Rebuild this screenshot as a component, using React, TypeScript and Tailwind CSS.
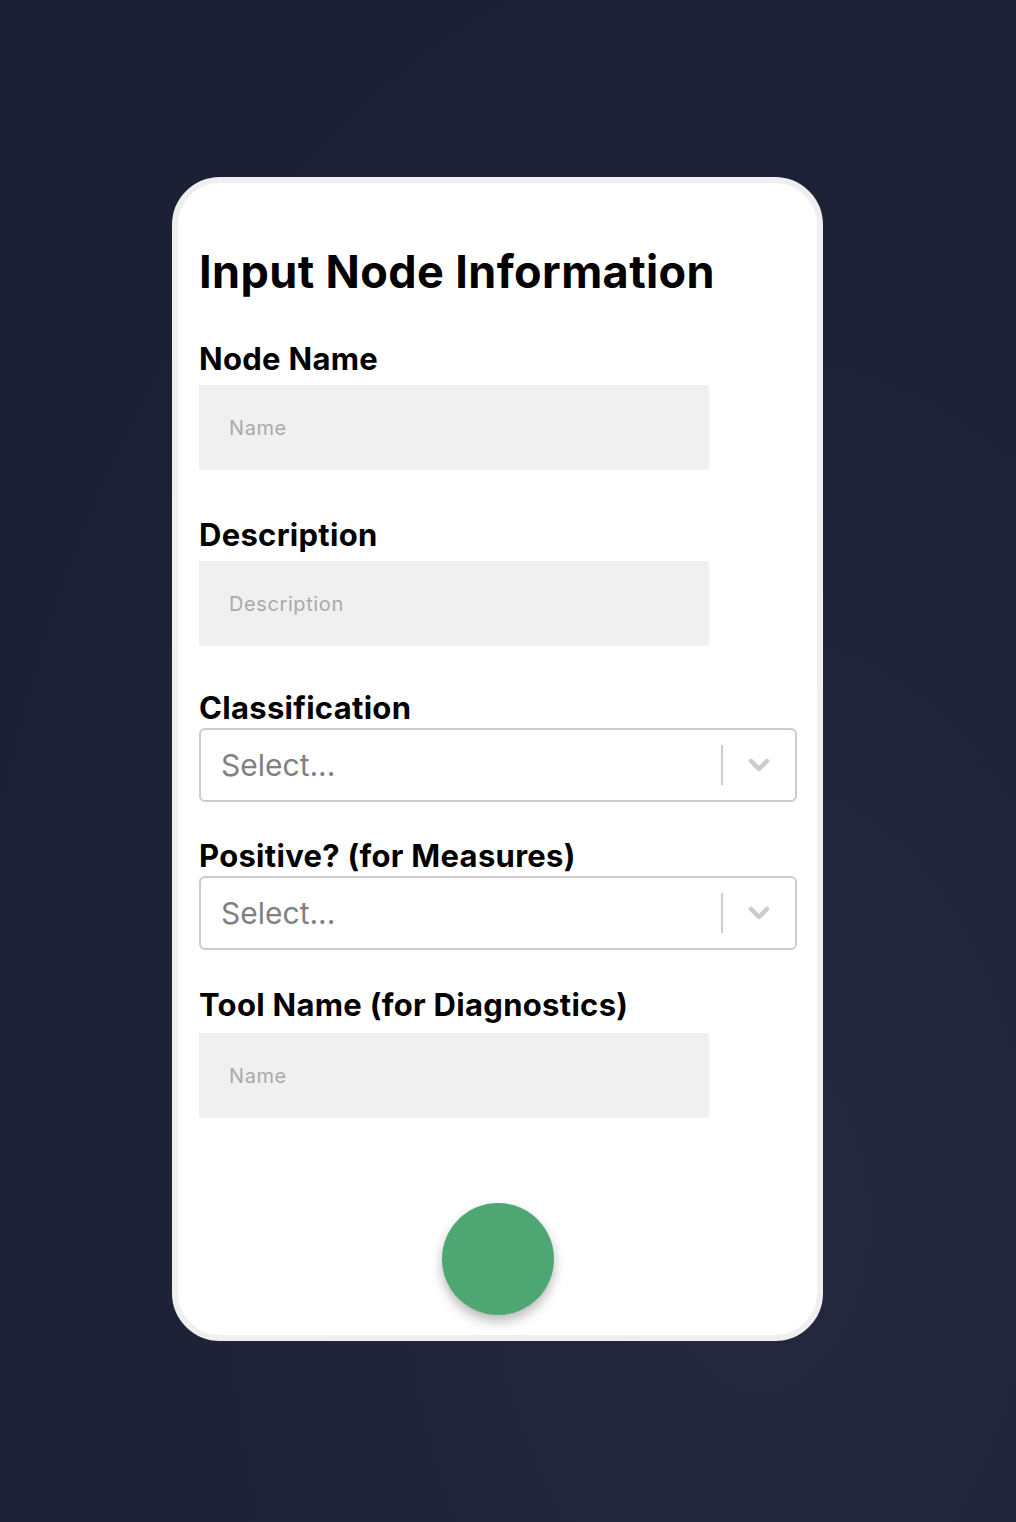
import { ChevronDown } from 'lucide-react';

function TextField({ label, placeholder, className, gap = 'mt-[11px]' }: { label: string; placeholder: string; className?: string; gap?: string }) {
  return (
    <div className={className}>
      <label className="block text-[31px] leading-[30px] font-bold tracking-[0.3px] text-black">{label}</label>
      <input
        type="text"
        placeholder={placeholder}
        className={`${gap} block w-[510px] h-[85px] bg-[#f0f0f0] pl-[30px] text-[20px] tracking-[0.6px] text-black placeholder:text-[#a9a9a9] outline-none`}
      />
    </div>
  );
}

function SelectField({ label, className }: { label: string; className?: string }) {
  return (
    <div className={className}>
      <label className="block text-[31px] leading-[30px] font-bold tracking-[0.3px] text-black">{label}</label>
      <div className="mt-[5px] flex items-center w-[598px] h-[74px] rounded-[6px] border-2 border-[#cccccc] bg-white">
        <span className="flex-1 pl-[20px] text-[30px] text-[#808080]">Select...</span>
        <div className="w-[2px] h-[40px] bg-[#cccccc]" />
        <div className="w-[72px] flex justify-center">
          <ChevronDown className="text-[#cccccc]" size={32} strokeWidth={3.4} />
        </div>
      </div>
    </div>
  );
}

export default function App() {
  return (
    <div
      className="min-h-screen w-full bg-[radial-gradient(ellipse_at_75%_80%,#232840_0%,#1c2034_75%)] pt-[177px] pb-[181px]"
      style={{ fontFamily: 'Inter, "Liberation Sans", sans-serif' }}
    >
      <div className="ml-[172px] w-[651px] h-[1164px] rounded-[48px] border-[6px] border-[#efefef] bg-white pl-[21px]">
        <h1 className="mt-[67px] text-[45px] leading-[44px] font-bold tracking-[0.4px] text-black">Input Node Information</h1>

        <TextField label="Node Name" placeholder="Name" className="mt-[50px]" />
        <TextField label="Description" placeholder="Description" className="mt-[50px]" />
        <SelectField label="Classification" className="mt-[47px]" />
        <SelectField label="Positive? (for Measures)" className="mt-[39px]" />
        <TextField label="Tool Name (for Diagnostics)" placeholder="Name" className="mt-[40px]" gap="mt-[13px]" />

        <div className="mt-[85px] flex justify-center w-[598px]">
          <button
            type="button"
            className="w-[112px] h-[112px] rounded-full bg-[#4ea772] shadow-[0_6px_12px_rgba(0,0,0,0.28)]"
          />
        </div>
      </div>
    </div>
  );
}
